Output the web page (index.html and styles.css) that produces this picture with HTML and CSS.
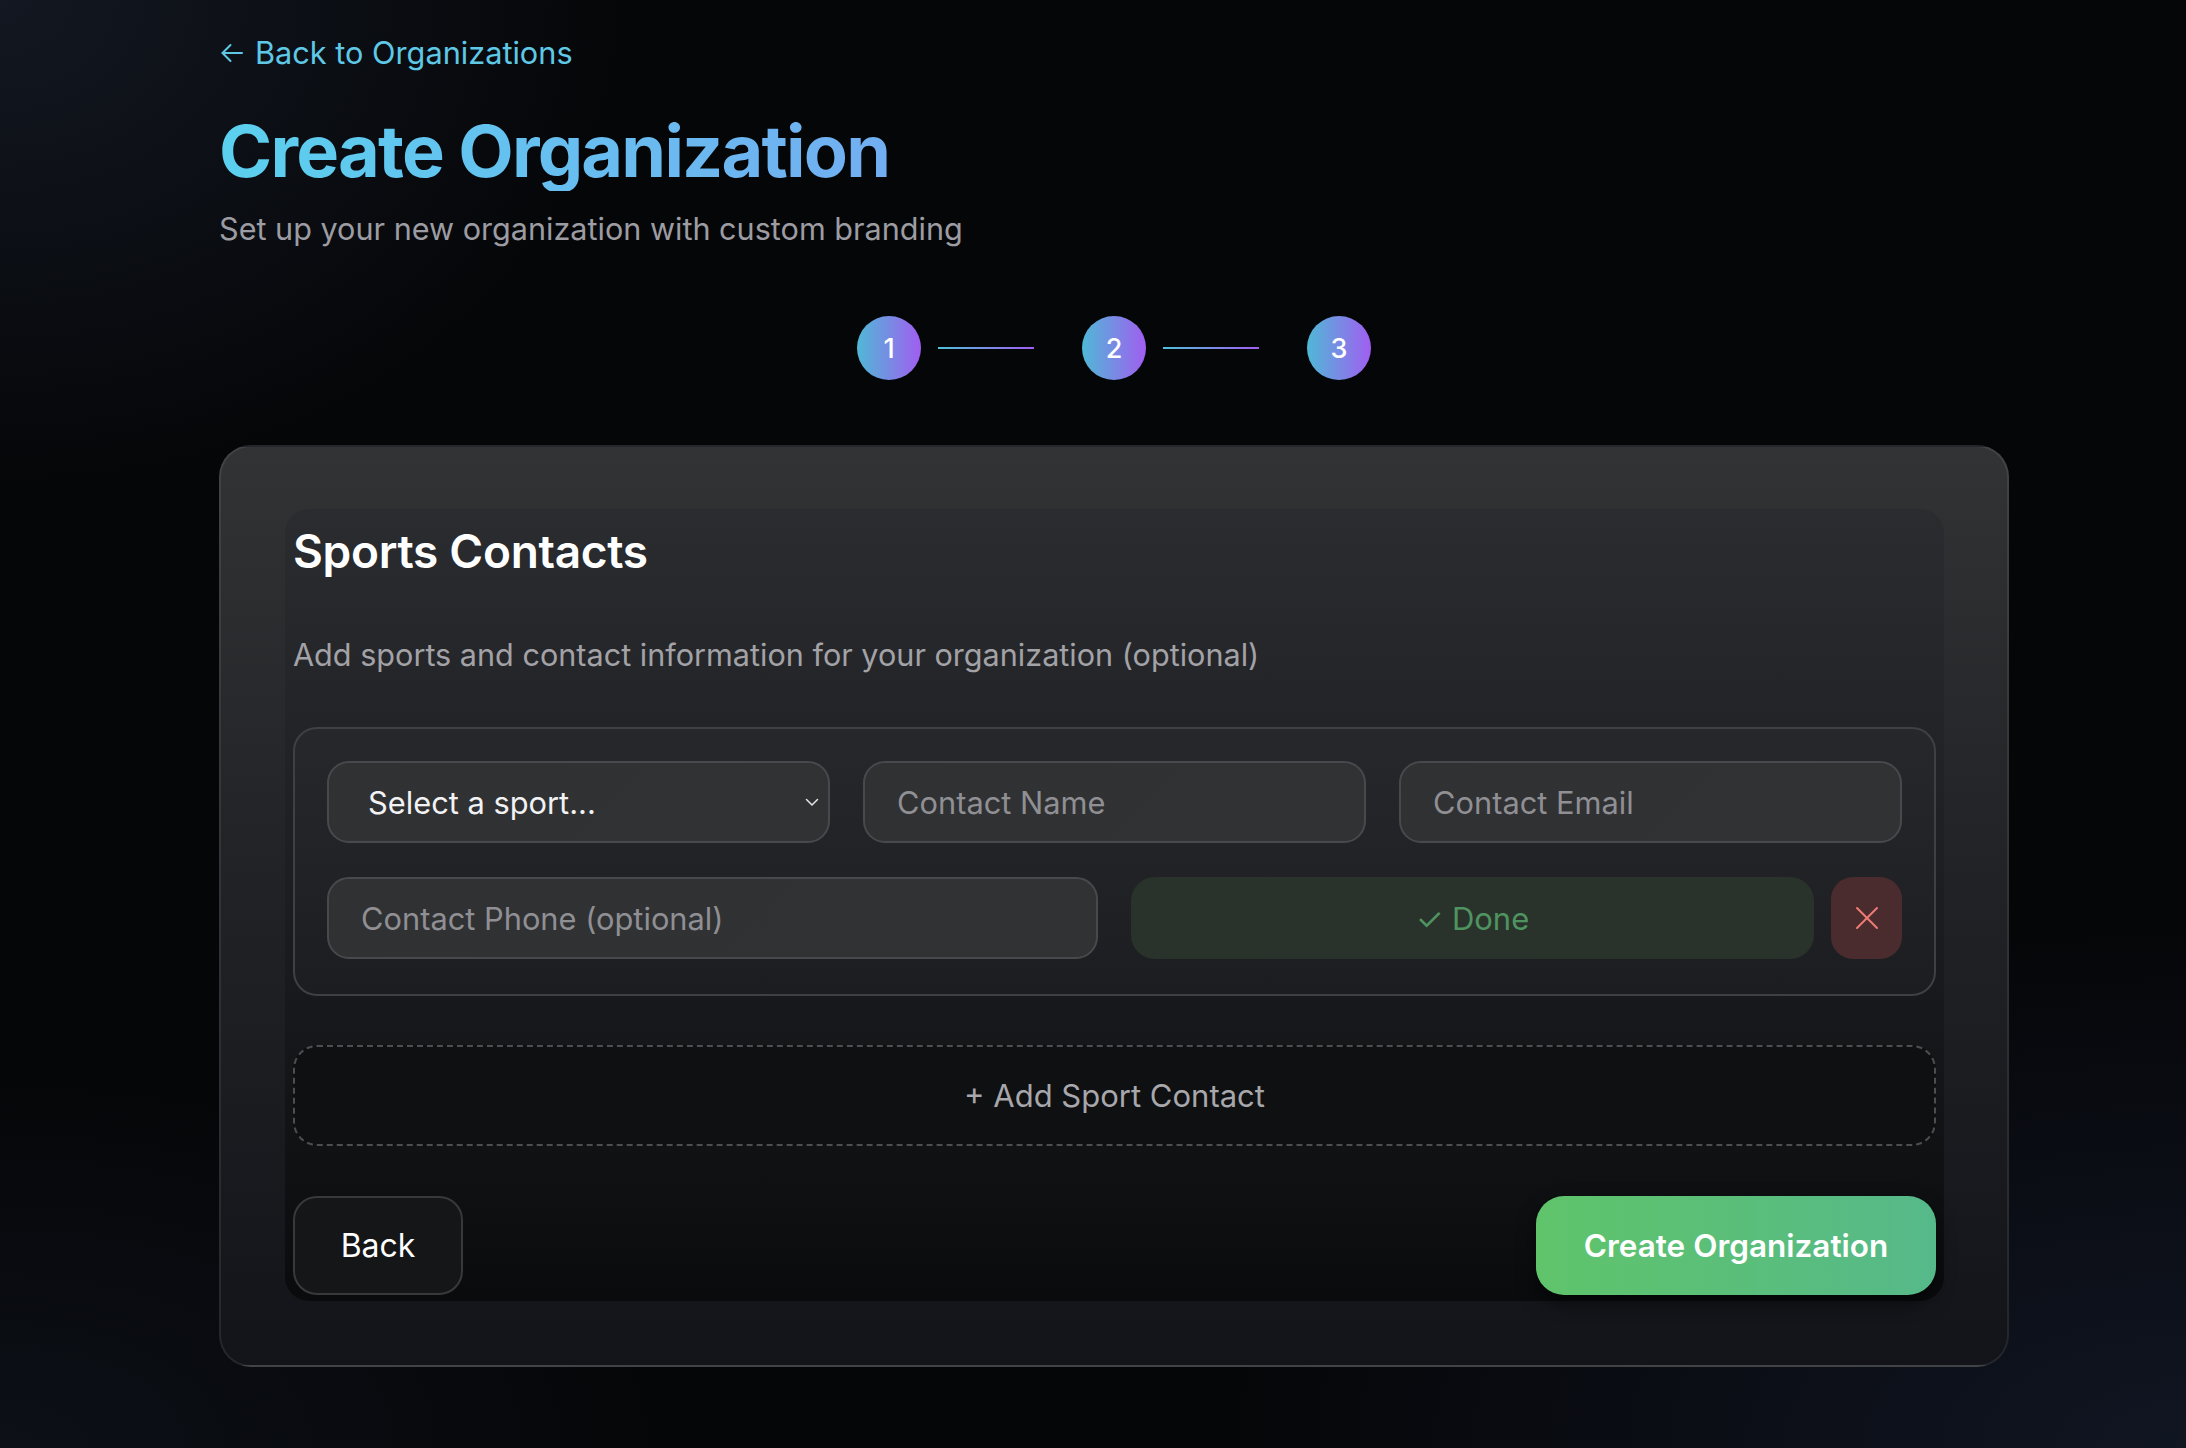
FILE: index.html
```html
<!DOCTYPE html>
<html lang="en">
<head>
<meta charset="utf-8">
<title>Create Organization</title>
<link rel="stylesheet" href="styles.css">
</head>
<body>
<div class="page">
  <a class="back-link" href="#">
    <svg class="back-arrow" width="22" height="20" viewBox="0 0 22 20" fill="none" stroke="currentColor" stroke-width="2" stroke-linecap="round" stroke-linejoin="round"><path d="M21 10H1.5"/><path d="M9.5 2L1.5 10l8 8"/></svg>
    <span>Back to Organizations</span>
  </a>
  <h1 class="title">Create Organization</h1>
  <p class="subtitle">Set up your new organization with custom branding</p>

  <div class="stepper">
    <div class="step-circle">1</div>
    <div class="step-line"></div>
    <div class="step-circle">2</div>
    <div class="step-line"></div>
    <div class="step-circle">3</div>
  </div>

  <div class="card">
    <div class="panel">
      <h2 class="panel-title">Sports Contacts</h2>
      <p class="panel-desc">Add sports and contact information for your organization (optional)</p>

      <div class="contact-box">
        <div class="row-3">
          <div class="field select-field">
            <span>Select a sport...</span>
            <svg width="14" height="9" viewBox="0 0 14 9" fill="none" stroke="#e6e6e8" stroke-width="1.5" stroke-linecap="round" stroke-linejoin="round"><path d="M1.5 1.5L7 7l5.5-5.5"/></svg>
          </div>
          <div class="field placeholder">Contact Name</div>
          <div class="field placeholder">Contact Email</div>
        </div>
        <div class="row-2">
          <div class="field placeholder">Contact Phone (optional)</div>
          <div class="actions">
            <button class="done-btn">✓ Done</button>
            <button class="remove-btn" aria-label="Remove">
              <svg width="24" height="24" viewBox="0 0 24 24" fill="none" stroke="#ee7b74" stroke-width="2" stroke-linecap="round"><path d="M2 2l20 20"/><path d="M22 2L2 22"/></svg>
            </button>
          </div>
        </div>
      </div>

      <button class="add-btn">+ Add Sport Contact</button>

      <div class="footer">
        <button class="back-btn">Back</button>
        <button class="create-btn">Create Organization</button>
      </div>
    </div>
  </div>
</div>
</body>
</html>
```

FILE: styles.css
```css
* { box-sizing: border-box; }

html, body {
  margin: 0;
  padding: 0;
}

body {
  min-height: 1448px;
  font-family: Inter, "Noto Sans", "Liberation Sans", sans-serif;
  color: #fff;
  background:
    radial-gradient(ellipse 900px 700px at 0% 0%, rgba(30, 38, 54, 0.55), rgba(0,0,0,0) 70%),
    radial-gradient(ellipse 1300px 700px at 100% 100%, rgba(24, 32, 52, 0.6), rgba(0,0,0,0) 75%),
    radial-gradient(ellipse 900px 500px at 0% 100%, rgba(20, 26, 38, 0.5), rgba(0,0,0,0) 75%),
    #050608;
}

.page {
  width: 2009px;
  padding: 33px 0 78px 219px;
}

.back-link {
  display: flex;
  align-items: center;
  gap: 12px;
  color: #5ec8e6;
  text-decoration: none;
  font-size: 30.7px;
  line-height: 40px;
  width: max-content;
  margin-left: 2px;
}

.back-arrow {
  width: 22px;
  height: 20px;
}

.title {
  margin: 38px 0 0;
  font-size: 72px;
  line-height: 80px;
  font-weight: 700;
  letter-spacing: -1.8px;
  background: linear-gradient(90deg, #5bd0ee 0%, #72aef1 100%);
  -webkit-background-clip: text;
  background-clip: text;
  color: transparent;
  width: max-content;
}

.subtitle {
  margin: 18px 0 0;
  font-size: 30.6px;
  line-height: 40px;
  color: #9c9ca2;
}

.stepper {
  margin-top: 67px;
  display: flex;
  justify-content: center;
  align-items: center;
}

.step-circle {
  width: 64px;
  height: 64px;
  border-radius: 50%;
  background: linear-gradient(90deg, #4fb8d6 0%, #a15ef1 100%);
  display: flex;
  align-items: center;
  justify-content: center;
  font-size: 27px;
  font-weight: 500;
  color: #fff;
}

.step-line {
  width: 96px;
  height: 2px;
  margin: 0 48px 0 17px;
  background: linear-gradient(90deg, #4fc0da 0%, #a15ef1 100%);
}

.card {
  margin-top: 65px;
  border: 2px solid rgba(255, 255, 255, 0.08);
  border-radius: 32px;
  padding: 62px 63px 64px 64px;
  background: linear-gradient(180deg, #323335 0%, #222326 45%, #121419 100%);
}

.panel {
  border-radius: 24px;
  padding: 14px 8px 6px 8px;
  background: linear-gradient(180deg, #2b2c2f 0%, #1c1d20 50%, #0a0b0d 100%);
}

.panel-title {
  margin: 0;
  font-size: 46px;
  line-height: 56px;
  font-weight: 600;
  color: #fff;
  letter-spacing: -0.3px;
}

.panel-desc {
  margin: 54px 0 0;
  font-size: 30.6px;
  line-height: 44px;
  color: #a2a2a7;
}

.contact-box {
  margin-top: 50px;
  border: 2px solid #3f4043;
  border-radius: 24px;
  padding: 32px 32px 35px;
  background: rgba(255, 255, 255, 0.02);
  display: flex;
  flex-direction: column;
  gap: 34px;
}

.row-3 {
  display: grid;
  grid-template-columns: 1fr 1fr 1fr;
  gap: 33px;
}

.row-2 {
  display: grid;
  grid-template-columns: 1fr 1fr;
  gap: 33px;
}

.field {
  height: 82px;
  border: 2px solid #48494c;
  border-radius: 22px;
  background: linear-gradient(135deg, #303133 0%, #313234 100%);
  display: flex;
  align-items: center;
  padding: 0 32px;
  font-size: 30.8px;
}

.placeholder {
  color: #8f8f94;
}

.select-field {
  justify-content: space-between;
  padding: 0 9px 0 39px;
  color: #f2f2f4;
}

.actions {
  display: flex;
  gap: 17px;
}

button {
  font-family: inherit;
  cursor: pointer;
}

.done-btn {
  flex: 1;
  height: 82px;
  border: none;
  border-radius: 24px;
  background: #29332b;
  color: #4f9460;
  font-size: 31px;
}

.remove-btn {
  width: 71px;
  height: 82px;
  border: none;
  border-radius: 22px;
  background: #4a2c2f;
  display: flex;
  align-items: center;
  justify-content: center;
  padding: 0;
}

.add-btn {
  display: block;
  width: 100%;
  margin-top: 49px;
  height: 101px;
  border: 2px dashed #4d4e51;
  border-radius: 24px;
  background: #0f1012;
  color: #a7a7ac;
  font-size: 31px;
}

.footer {
  margin-top: 50px;
  display: flex;
  justify-content: space-between;
  align-items: center;
}

.back-btn {
  width: 170px;
  height: 99px;
  border: 2px solid #38393b;
  border-radius: 24px;
  background: #151617;
  color: #fff;
  font-size: 32px;
}

.create-btn {
  width: 400px;
  height: 99px;
  border: none;
  border-radius: 28px;
  background: linear-gradient(90deg, #5fc46a 0%, #56b98a 100%);
  color: #fff;
  font-size: 31.5px;
  font-weight: 600;
  box-shadow: 0 8px 18px rgba(0, 0, 0, 0.55);
}
```
